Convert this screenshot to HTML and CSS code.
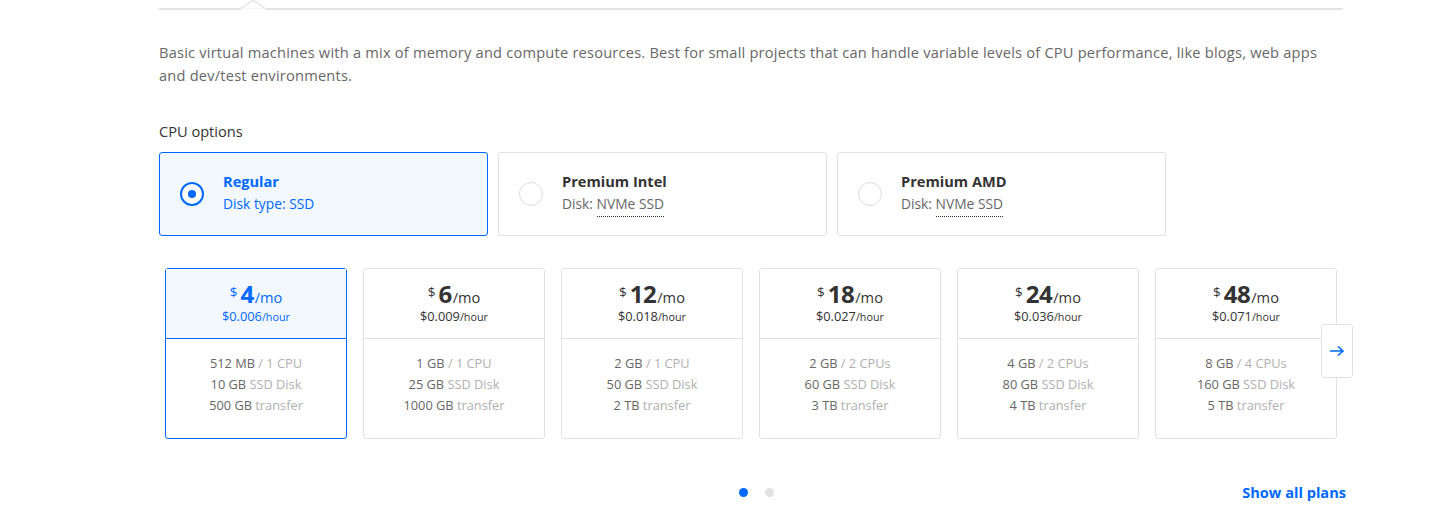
FILE: index.html
```html
<!DOCTYPE html>
<html>
<head>
<meta charset="utf-8">
<link rel="stylesheet" href="styles.css">
</head>
<body>
<div class="page">
  <div class="tabline">
    <svg class="notch" width="28" height="11" viewBox="0 0 28 11"><polygon points="1,10 14,1 27,10" fill="#fff" stroke="#e2e2e2" stroke-width="1.2"/><rect x="2" y="9.6" width="24" height="2" fill="#fff"/></svg>
  </div>
  <p class="desc">Basic virtual machines with a mix of memory and compute resources. Best for small projects that can handle variable levels of CPU performance, like blogs, web apps and dev/test environments.</p>
  <h3 class="label">CPU options</h3>
  <div class="cpu-row">
    <div class="cpu selected">
      <span class="radio on"></span>
      <div class="cpu-text"><div class="cpu-title">Regular</div><div class="cpu-sub">Disk type: SSD</div></div>
    </div>
    <div class="cpu">
      <span class="radio"></span>
      <div class="cpu-text"><div class="cpu-title">Premium Intel</div><div class="cpu-sub">Disk: <span class="dotted">NVMe SSD</span></div></div>
    </div>
    <div class="cpu">
      <span class="radio"></span>
      <div class="cpu-text"><div class="cpu-title">Premium AMD</div><div class="cpu-sub">Disk: <span class="dotted">NVMe SSD</span></div></div>
    </div>
  </div>
  <div class="plans-wrap">
    <div class="plans">
      <div class="plan selected">
        <div class="plan-head"><div class="price"><span class="cur">$</span><span class="amt">4</span><span class="per">/mo</span></div><div class="hour">$0.006<span class="hu">/hour</span></div></div>
        <div class="plan-body"><div>512 MB <span class="lt">/ 1 CPU</span></div><div>10 GB <span class="lt">SSD Disk</span></div><div>500 GB <span class="lt">transfer</span></div></div>
      </div>
      <div class="plan">
        <div class="plan-head"><div class="price"><span class="cur">$</span><span class="amt">6</span><span class="per">/mo</span></div><div class="hour">$0.009<span class="hu">/hour</span></div></div>
        <div class="plan-body"><div>1 GB <span class="lt">/ 1 CPU</span></div><div>25 GB <span class="lt">SSD Disk</span></div><div>1000 GB <span class="lt">transfer</span></div></div>
      </div>
      <div class="plan">
        <div class="plan-head"><div class="price"><span class="cur">$</span><span class="amt">12</span><span class="per">/mo</span></div><div class="hour">$0.018<span class="hu">/hour</span></div></div>
        <div class="plan-body"><div>2 GB <span class="lt">/ 1 CPU</span></div><div>50 GB <span class="lt">SSD Disk</span></div><div>2 TB <span class="lt">transfer</span></div></div>
      </div>
      <div class="plan">
        <div class="plan-head"><div class="price"><span class="cur">$</span><span class="amt">18</span><span class="per">/mo</span></div><div class="hour">$0.027<span class="hu">/hour</span></div></div>
        <div class="plan-body"><div>2 GB <span class="lt">/ 2 CPUs</span></div><div>60 GB <span class="lt">SSD Disk</span></div><div>3 TB <span class="lt">transfer</span></div></div>
      </div>
      <div class="plan">
        <div class="plan-head"><div class="price"><span class="cur">$</span><span class="amt">24</span><span class="per">/mo</span></div><div class="hour">$0.036<span class="hu">/hour</span></div></div>
        <div class="plan-body"><div>4 GB <span class="lt">/ 2 CPUs</span></div><div>80 GB <span class="lt">SSD Disk</span></div><div>4 TB <span class="lt">transfer</span></div></div>
      </div>
      <div class="plan">
        <div class="plan-head"><div class="price"><span class="cur">$</span><span class="amt">48</span><span class="per">/mo</span></div><div class="hour">$0.071<span class="hu">/hour</span></div></div>
        <div class="plan-body"><div>8 GB <span class="lt">/ 4 CPUs</span></div><div>160 GB <span class="lt">SSD Disk</span></div><div>5 TB <span class="lt">transfer</span></div></div>
      </div>
    </div>
    <button class="next"><svg width="16" height="12" viewBox="0 0 16 12"><path d="M1 6H14M9 1.5L14 6L9 10.5" fill="none" stroke="#0069ff" stroke-width="1.6"/></svg></button>
  </div>
  <div class="footer">
    <div class="dots"><span class="dot on"></span><span class="dot"></span></div>
    <a class="showall">Show all plans</a>
  </div>
</div>
</body>
</html>
```

FILE: styles.css
```css
* { box-sizing: border-box; }
body { margin: 0; background: #fff; font-family: "Open Sans", "Lato", sans-serif; color: #676767; }
.page { width: 1184px; margin-left: 159px; }
.tabline { position: relative; height: 10px; border-bottom: 2px solid #e2e2e2; }
.notch { position: absolute; left: 80px; top: -1px; }
.desc { margin: 31px 0 0; font-size: 14.65px; letter-spacing: 0.2px; line-height: 23px; color: #676767; }
.label { margin: 34px 0 0; font-size: 14.6px; font-weight: 500; color: #333; line-height: 20px; }
.cpu-row { display: flex; gap: 10px; margin-top: 11px; }
.cpu { width: 329px; height: 84px; border: 1px solid #e2e2e2; border-radius: 3px; display: flex; align-items: center; padding-left: 20px; }
.cpu.selected { border-color: #0069ff; background: #f3f8ff; }
.radio { width: 24px; height: 24px; border-radius: 50%; border: 1px solid #dcdcdc; background: #fff; flex: none; position: relative; }
.radio.on { border: 2px solid #0069ff; }
.radio.on::after { content: ""; position: absolute; left: 6px; top: 6px; width: 8px; height: 8px; border-radius: 50%; background: #0069ff; }
.cpu-text { margin-left: 19px; margin-top: -3px; }
.cpu-title { font-size: 14.6px; font-weight: 700; color: #333; line-height: 22px; }
.cpu-sub { font-size: 13.8px; color: #676767; line-height: 22px; margin-top: 1px; }
.selected .cpu-title, .selected .cpu-sub { color: #0069ff; }
.dotted { border-bottom: 1px dotted #333; padding-bottom: 3px; }
.plans-wrap { position: relative; margin-top: 32px; padding-left: 6px; }
.plans { display: flex; gap: 16px; }
.plan { width: 182px; height: 171px; border: 1px solid #e2e2e2; border-radius: 3px; text-align: center; }
.plan.selected { border-color: #0069ff; }
.plan-head { height: 70px; border-bottom: 1px solid #e2e2e2; padding-top: 13px; color: #333; }
.plan.selected .plan-head { background: #f3f8ff; border-bottom-color: #0069ff; color: #0069ff; }
.price { line-height: 20px; height: 20px; }
.cur { font-size: 13.5px; vertical-align: 6px; margin-right: 3px; }
.amt { font-size: 24px; font-weight: 700; letter-spacing: -0.5px; }
.per { font-size: 14.6px; margin-left: 1px; }
.hour { font-size: 12.8px; line-height: 14px; margin-top: 7px; }
.hu { font-size: 10.8px; }
.plan-body { padding-top: 14px; font-size: 12.8px; line-height: 21px; color: #676767; }
.lt { color: #b0b0b0; }
.next { position: absolute; left: 1162px; top: 56px; width: 32px; height: 54px; border: 1px solid #e2e2e2; border-radius: 3px; background: #fff; padding: 0; display: flex; align-items: center; justify-content: center; }
.footer { position: relative; display: flex; justify-content: center; align-items: center; margin-top: 43px; height: 20px; }
.dots { display: flex; gap: 17px; margin-left: 11px; }
.dot { width: 9px; height: 9px; border-radius: 50%; background: #e2e2e2; }
.dot.on { background: #0069ff; }
.showall { position: absolute; right: -3px; top: 0; font-size: 14.6px; font-weight: 700; color: #0069ff; line-height: 20px; }
```
